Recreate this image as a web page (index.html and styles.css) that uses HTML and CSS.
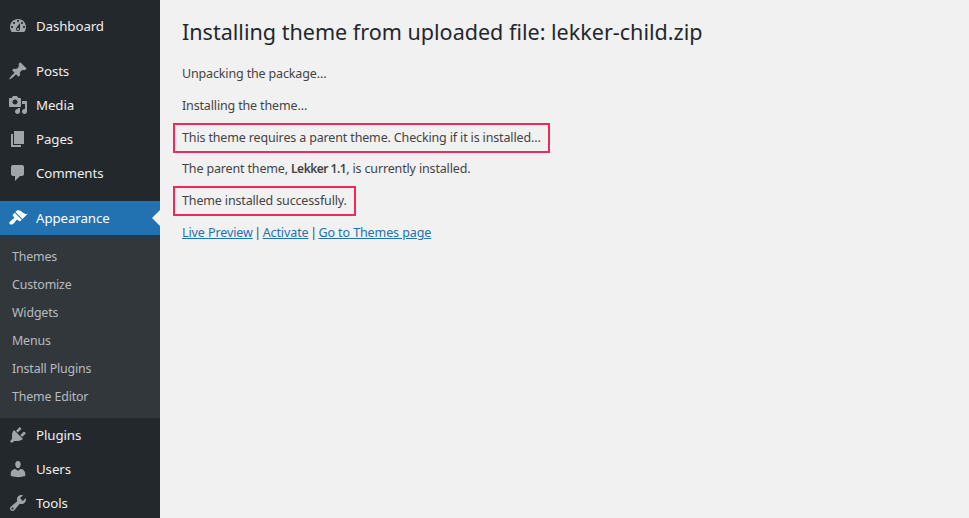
FILE: index.html
```html
<!DOCTYPE html>
<html lang="en">
<head>
<meta charset="utf-8">
<title>Installing theme</title>
<link rel="stylesheet" href="styles.css">
</head>
<body>
<div class="layout">
  <nav class="sidebar">
    <a class="item" href="#"><svg class="icon" viewBox="0 0 20 20"><path d="M3.76 16h12.48c1.1-1.37 1.76-3.11 1.76-5 0-4.42-3.58-8-8-8s-8 3.58-8 8c0 1.89.66 3.63 1.76 5zM10 4c.55 0 1 .45 1 1s-.45 1-1 1-1-.45-1-1 .45-1 1-1zM6 6c.55 0 1 .45 1 1s-.45 1-1 1-1-.45-1-1 .45-1 1-1zm8 0c.55 0 1 .45 1 1s-.45 1-1 1-1-.45-1-1 .45-1 1-1zm-5.37 5.55L12 7v6c0 1.1-.9 2-2 2s-2-.9-2-2c0-.57.24-1.08.63-1.45zM4 10c.55 0 1 .45 1 1s-.45 1-1 1-1-.45-1-1 .45-1 1-1zm12 0c.55 0 1 .45 1 1s-.45 1-1 1-1-.45-1-1 .45-1 1-1zm-5 3c0-.55-.45-1-1-1s-1 .45-1 1 .45 1 1 1 1-.45 1-1z"/></svg><span>Dashboard</span></a>
    <div class="sep"></div>
    <a class="item" href="#"><svg class="icon" viewBox="0 0 20 20"><path d="M10.44 3.02l1.82-1.82 6.36 6.35-1.83 1.82c-1.05-.68-2.48-.57-3.41.36l-.75.75c-.92.93-1.04 2.35-.35 3.41l-1.83 1.82-2.41-2.41-2.8 2.79c-.42.42-3.38 2.71-3.8 2.29s1.86-3.39 2.28-3.81l2.79-2.79L4.1 9.36l1.83-1.82c1.05.69 2.48.57 3.41-.36l.75-.75c.93-.92 1.04-2.35.35-3.41z"/></svg><span>Posts</span></a>
    <a class="item" href="#"><svg class="icon" viewBox="0 0 20 20"><path d="M13 11V4c0-.55-.45-1-1-1h-1.67L9 1H5L3.67 3H2c-.55 0-1 .45-1 1v7c0 .55.45 1 1 1h10c.55 0 1-.45 1-1zM7 4.5c1.38 0 2.5 1.12 2.5 2.5S8.38 9.5 7 9.5 4.5 8.38 4.5 7 5.62 4.5 7 4.5zM14 6h5v10.5c0 1.38-1.12 2.5-2.5 2.5S14 17.88 14 16.5s1.12-2.5 2.5-2.5c.17 0 .34.02.5.05V9h-3V6zm-4 8.05V13h2v3.5c0 1.38-1.12 2.5-2.5 2.5S7 17.88 7 16.5 8.12 14 9.5 14c.17 0 .34.02.5.05z"/></svg><span>Media</span></a>
    <a class="item" href="#"><svg class="icon" viewBox="0 0 20 20"><path d="M6 15V2h10v13H6zm-1 1h8v2H3V5h2v11z"/></svg><span>Pages</span></a>
    <a class="item" href="#"><svg class="icon" viewBox="0 0 20 20"><path d="M5 2h9c1.1 0 2 .9 2 2v7c0 1.1-.9 2-2 2h-2l-5 5v-5H5c-1.1 0-2-.9-2-2V4c0-1.1.9-2 2-2z"/></svg><span>Comments</span></a>
    <div class="sep"></div>
    <a class="item current" href="#"><svg class="icon" viewBox="0 0 20 20"><path d="M14.48 11.06L7.41 3.99l1.5-1.5c.5-.56 2.3-.47 3.51.32 1.21.8 1.43 1.28 2.91 2.1 1.18.64 2.45 1.26 4.45.85zm-.71.71L6.7 4.7 4.93 6.47c-.39.39-.39 1.02 0 1.41l1.06 1.06c.39.39.39 1.03 0 1.42-.6.6-1.43 1.11-2.21 1.69-.35.26-.7.53-1.01.84C1.43 13.23.91 15.04 1.82 16s2.77.52 4.12-.82c.32-.32.59-.67.85-1.02.58-.79 1.09-1.62 1.69-2.22.39-.39 1.02-.39 1.41 0l1.06 1.06c.39.39 1.02.39 1.41 0z"/></svg><span>Appearance</span></a>
    <div class="submenu">
      <a href="#">Themes</a>
      <a href="#">Customize</a>
      <a href="#">Widgets</a>
      <a href="#">Menus</a>
      <a href="#">Install Plugins</a>
      <a href="#">Theme Editor</a>
    </div>
    <a class="item" href="#"><svg class="icon" viewBox="0 0 20 20"><path d="M13.11 4.36L9.87 7.6 8 5.73l3.24-3.24c.35-.34 1.05-.2 1.56.32.52.51.66 1.21.31 1.55zm-8 1.77l.91-1.12 9.01 9.01-1.19.84c-.71.71-2.63 1.16-3.82 1.16H6.14L4.9 17.26c-.59.59-1.54.59-2.12 0-.59-.58-.59-1.53 0-2.12l1.24-1.24v-3.88c0-1.13.4-3.19 1.09-3.89zm7.26 3.97l3.24-3.24c.34-.35 1.04-.21 1.55.31.52.51.66 1.21.31 1.55l-3.24 3.25z"/></svg><span>Plugins</span></a>
    <a class="item" href="#"><svg class="icon" viewBox="0 0 20 20"><path d="M10 9.25c-2.27 0-2.73-3.44-2.73-3.44C7 4.02 7.82 2 9.97 2c2.16 0 2.98 2.02 2.71 3.81 0 0-.41 3.44-2.68 3.44zm0 2.57L12.72 10c2.39 0 4.52 2.33 4.52 4.53v2.49s-3.65 1.13-7.24 1.13c-3.65 0-7.24-1.13-7.24-1.13v-2.49c0-2.25 1.94-4.48 4.47-4.48z"/></svg><span>Users</span></a>
    <a class="item" href="#"><svg class="icon" viewBox="0 0 20 20"><path d="M16.68 9.77c-1.34 1.34-3.3 1.67-4.95.99l-5.41 6.52c-.99.99-2.59.99-3.58 0s-.99-2.59 0-3.57l6.52-5.42c-.68-1.65-.35-3.61.99-4.95 1.28-1.28 3.12-1.62 4.72-1.06l-2.89 2.89 2.82 2.82 2.86-2.87c.53 1.58.18 3.39-1.08 4.65zM3.81 16.21c.4.39 1.04.39 1.43 0 .4-.4.4-1.04 0-1.43-.39-.4-1.03-.4-1.43 0-.39.39-.39 1.03 0 1.43z"/></svg><span>Tools</span></a>
  </nav>
  <main class="content">
    <h1 class="title">Installing theme from uploaded file: lekker-child.zip</h1>
    <p class="line">Unpacking the package…</p>
    <p class="line">Installing the theme…</p>
    <p class="line boxed">This theme requires a parent theme. Checking if it is installed…</p>
    <p class="line">The parent theme, <strong>Lekker 1.1</strong>, is currently installed.</p>
    <p class="line boxed">Theme installed successfully.</p>
    <p class="line"><a href="#">Live Preview</a> <span class="pipe">|</span> <a href="#">Activate</a> <span class="pipe">|</span> <a href="#">Go to Themes page</a></p>
  </main>
</div>
</body>
</html>
```

FILE: styles.css
```css
html, body {
  margin: 0;
  height: 100%;
  overflow: hidden;
}

body {
  background: #f1f1f1;
  color: #444;
  font-family: "Noto Sans", "Open Sans", sans-serif;
  font-size: 13px;
  line-height: 20px;
}

.layout {
  display: flex;
  height: 518px;
  overflow: hidden;
}

.sidebar {
  flex: 0 0 160px;
  display: flex;
  flex-direction: column;
  box-sizing: border-box;
  padding-top: 9px;
  background: #23282d;
  overflow: hidden;
}

.item {
  flex: 0 0 34px;
  position: relative;
  display: flex;
  align-items: center;
  gap: 8px;
  padding-left: 8px;
  color: #eee;
  font-size: 13.3px;
  letter-spacing: -0.1px;
  text-decoration: none;
}

.icon {
  flex: 0 0 20px;
  width: 20px;
  height: 20px;
  fill: #a0a5aa;
}

.sep {
  flex: 0 0 11px;
}

.current {
  background: #2271b1;
  color: #fff;
}

.current .icon {
  fill: #fff;
}

.current::after {
  content: "";
  position: absolute;
  right: 0;
  top: 50%;
  margin-top: -8px;
  border: 8px solid transparent;
  border-left-width: 0;
  border-right-color: #f1f1f1;
}

.submenu {
  flex: 0 0 auto;
  display: flex;
  flex-direction: column;
  padding: 8px 0 7px;
  background: #32373c;
}

.submenu a {
  height: 28px;
  display: flex;
  align-items: center;
  padding-left: 12px;
  color: rgba(240, 245, 250, 0.7);
  font-size: 12.4px;
  letter-spacing: -0.15px;
  text-decoration: none;
}

.content {
  flex: 1;
  padding: 0 22px;
}

.title {
  margin: 0 0 16px;
  padding-top: 16px;
  color: #23282d;
  font-size: 21.55px;
  font-weight: 400;
  line-height: 32px;
}

.line {
  margin: 0 0 11.8px;
  font-size: 12.5px;
  letter-spacing: -0.15px;
}

.line a {
  color: #2271b1;
  letter-spacing: -0.1px;
}

.line strong {
  font-weight: 600;
  font-size: 12px;
  letter-spacing: -0.5px;
}

.pipe {
  margin: 0 -1.5px;
}

.boxed {
  width: fit-content;
  outline: 2px solid #ed2a5e;
  outline-offset: 3px;
  padding: 0 4px;
  margin-left: -4px;
}
```
